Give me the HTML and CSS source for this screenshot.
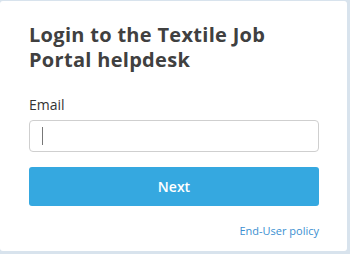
FILE: index.html
```html
<!DOCTYPE html>
<html>
<head>
<meta charset="utf-8">
<link rel="stylesheet" href="styles.css">
</head>
<body>
<div class="card">
  <h1 class="title">Login to the Textile Job Portal helpdesk</h1>
  <label class="label" for="email">Email</label>
  <div class="input"><span class="caret"></span></div>
  <button class="btn">Next</button>
  <div class="footer"><a class="policy" href="#">End-User policy</a></div>
</div>
</body>
</html>
```

FILE: styles.css
```css
html, body {
  margin: 0;
  padding: 0;
}
body {
  background: #d8e3ed;
  width: 350px;
  height: 254px;
  font-family: "Open Sans", "Noto Sans", sans-serif;
  overflow: hidden;
}
.card {
  box-sizing: border-box;
  width: 347px;
  height: 250px;
  margin-top: 1px;
  background: #ffffff;
  border-radius: 3px;
  padding: 21px 28px 0 29px;
  display: flex;
  flex-direction: column;
}
.title {
  margin: 0;
  font-size: 20px;
  line-height: 25px;
  font-weight: 700;
  color: #404040;
  letter-spacing: 0.3px;
}
.label {
  margin-top: 23px;
  font-size: 14px;
  line-height: 20px;
  color: #333;
}
.input {
  box-sizing: border-box;
  margin-top: 5px;
  height: 32px;
  border: 1px solid #cfcfcf;
  border-radius: 4px;
  display: flex;
  align-items: center;
  padding-left: 12px;
}
.caret {
  width: 1px;
  height: 18px;
  background: #777;
}
.btn {
  margin-top: 15px;
  height: 39px;
  border: none;
  border-radius: 3px;
  background: #35a8e0;
  color: #fff;
  font-family: "Open Sans", "Noto Sans", sans-serif;
  font-size: 14px;
  font-weight: 600;
  padding: 0;
}
.footer {
  margin-top: 17px;
  display: flex;
  justify-content: flex-end;
}
.policy {
  font-size: 11px;
  line-height: 16px;
  color: #3b8fd1;
  text-decoration: none;
}
```
